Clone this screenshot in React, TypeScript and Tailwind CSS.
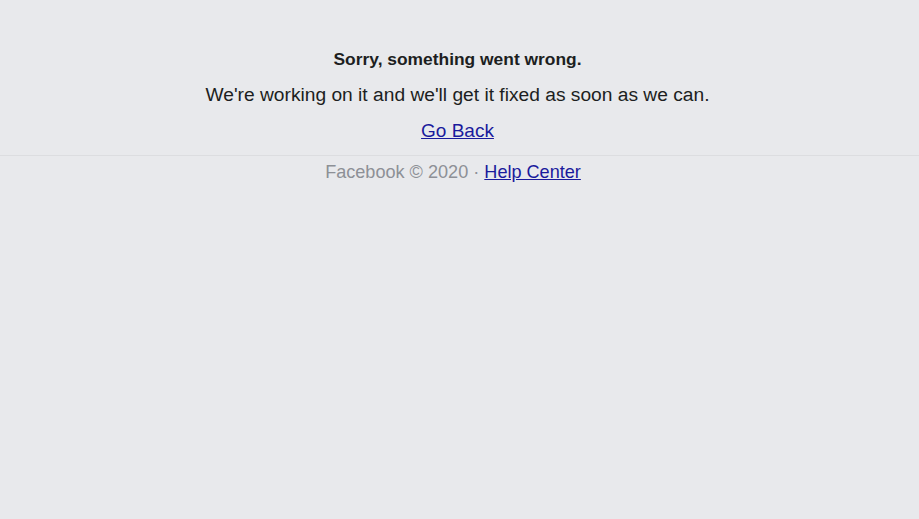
export default function App() {
  return (
    <div className="min-h-[519px] bg-[#e8e9ec] font-['Liberation_Sans',Arial,sans-serif]">
      <div className="pt-[48px] pr-[4px] text-center">
        <h1 className="text-[17.4px] font-bold leading-[22px] text-[#1c1e21]">Sorry, something went wrong.</h1>
        <p className="mt-[13px] text-[19.2px] leading-[24px] text-[#1c1e21]">
          We're working on it and we'll get it fixed as soon as we can.
        </p>
        <p className="mt-[12px] text-[19px] leading-[24px]">
          <a href="#" className="text-[#1a1a9c] underline">Go Back</a>
        </p>
      </div>
      <div className="mt-[12px] border-t border-[#dcdde0] pt-[4px] pr-[13px] text-center text-[18.1px] leading-[24px] text-[#8d9096]">
        Facebook © 2020 · <a href="#" className="text-[#1a1a9c] underline">Help Center</a>
      </div>
    </div>
  );
}
